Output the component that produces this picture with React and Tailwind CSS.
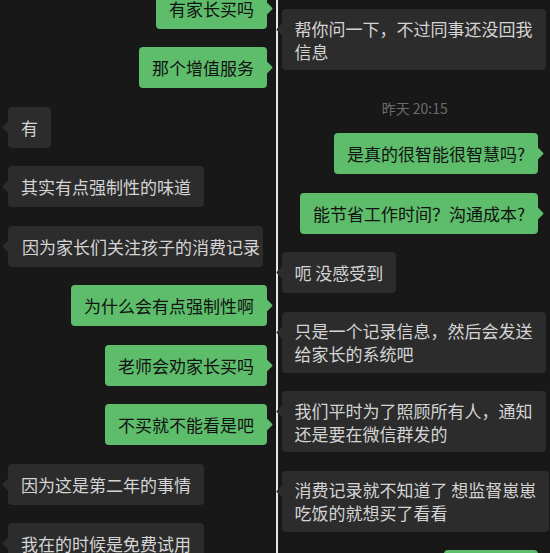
import React from "react";

const FONT = { fontFamily: '"Noto Sans CJK SC", "Noto Sans", sans-serif' };

function Green({ children, className = "" }) {
  return (
    <div className={"relative shrink-0 self-end flex min-h-[41px] items-center rounded-[4px] bg-[#5dbd6b] text-[#121212] " + className}>
      <span className="absolute right-[-4px] top-[16px] h-[9px] w-[9px] rotate-45 rounded-[1px] bg-[#5dbd6b]" />
      <div className="relative whitespace-nowrap px-[13px] py-[7.5px] text-[17px] leading-[23px]">{children}</div>
    </div>
  );
}

function Gray({ children, className = "", pad = "px-[13px]" }) {
  return (
    <div className={"relative shrink-0 self-start flex min-h-[41px] items-center rounded-[4px] bg-[#2c2c2c] text-[#d4d4d4] " + className}>
      <span className="absolute left-[-4px] top-[16px] h-[9px] w-[9px] rotate-45 rounded-[1px] bg-[#2c2c2c]" />
      <div className={"relative whitespace-nowrap py-[7.5px] text-[17px] leading-[23px] " + pad}>{children}</div>
    </div>
  );
}

export default function App() {
  return (
    <div className="flex h-[553px] w-[550px] overflow-hidden bg-[#181818]" style={FONT}>
      <div className="flex w-[276px] shrink-0 flex-col gap-[18.5px] pl-[8px] pr-[9px]">
        <Green className="mt-[-12.5px]">有家长买吗</Green>
        <Green>那个增值服务</Green>
        <Gray>有</Gray>
        <Gray>其实有点强制性的味道</Gray>
        <Gray pad="pl-[14px] pr-[3px]">因为家长们关注孩子的消费记录</Gray>
        <Green>为什么会有点强制性啊</Green>
        <Green>老师会劝家长买吗</Green>
        <Green>不买就不能看是吧</Green>
        <Gray>因为这是第二年的事情</Gray>
        <Gray>我在的时候是免费试用</Gray>
      </div>
      <div className="w-[1.5px] shrink-0 bg-[#e6e6e6]" />
      <div className="flex min-w-0 flex-1 flex-col pl-[4px] pr-[4px] pt-[9px]">
        <Gray>
          帮你问一下，不过同事还没回我
          <br />
          信息
        </Gray>
        <div className="mt-[28px] mb-[15px] shrink-0 pl-[2px] text-center text-[14px] leading-[20px] text-[#6c6c6c]">昨天 20:15</div>
        <div className="flex shrink-0 flex-col gap-[18.5px]">
          <Green className="mr-[8px]">是真的很智能很智慧吗?</Green>
          <Green className="mr-[8px]">能节省工作时间？沟通成本?</Green>
          <Gray>呃 没感受到</Gray>
          <Gray>
            只是一个记录信息，然后会发送
            <br />
            给家长的系统吧
          </Gray>
          <Gray>
            我们平时为了照顾所有人，通知
            <br />
            还是要在微信群发的
          </Gray>
          <Gray>
            消费记录就不知道了 想监督崽崽
            <br />
            吃饭的就想买了看看
          </Gray>
          <Green className="mr-[8px]">我也觉得</Green>
        </div>
      </div>
    </div>
  );
}
